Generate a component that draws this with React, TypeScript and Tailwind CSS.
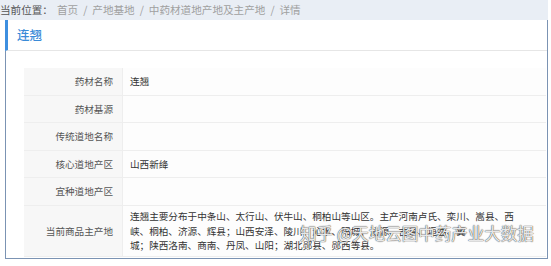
import React from "react";

const rows: { label: string; value: React.ReactNode; h: string }[] = [
  { label: "药材名称", value: "连翘", h: "h-[27.5px]" },
  { label: "药材基源", value: "", h: "h-[27.5px]" },
  { label: "传统道地名称", value: "", h: "h-[27.5px]" },
  { label: "核心道地产区", value: "山西新绛", h: "h-[27.5px]" },
  { label: "宜种道地产区", value: "", h: "h-[27.5px]" },
  {
    label: "当前商品主产地",
    value: (
      <div className="leading-[14.5px]">
        <div>连翘主要分布于中条山、太行山、伏牛山、桐柏山等山区。主产河南卢氏、栾川、嵩县、西</div>
        <div>峡、桐柏、济源、辉县；山西安泽、陵川、沁水、阳城、沁源、古县、垣曲、翼</div>
        <div>城；陕西洛南、商南、丹凤、山阳；湖北郧县、郧西等县。</div>
      </div>
    ),
    h: "h-[51.5px]",
  },
];

export default function App() {
  return (
    <div className="relative w-[551px] h-[266px] overflow-hidden bg-white font-['Noto_Sans_CJK_SC','Noto_Sans',sans-serif]">
      <div className="h-[20px] w-[548px] bg-[#e9eef5] flex items-center text-[10.6px] text-[#a0a0a0] whitespace-nowrap">
        <span className="text-[#555]">当前位置：</span>
        <span className="ml-[4px]">首页</span>
        <span className="mx-[5px]">/</span>
        <span>产地基地</span>
        <span className="mx-[5px]">/</span>
        <span>中药材道地产地及主产地</span>
        <span className="mx-[5px]">/</span>
        <span>详情</span>
      </div>
      <div className="ml-[5px] w-[543px] h-[239px] border-r border-b border-[#7b93b3] flex flex-col">
        <div className="h-[31px] border-l-[3px] border-[#3d8fe0] border-b border-b-[#e6e6e6] flex items-center pl-[9px]">
          <span className="text-[12.5px] text-[#3a8bd8] font-medium">连翘</span>
        </div>
        <div className="flex-1 border-l border-[#7b93b3] pl-[18px] pt-[17px] pr-[1px]">
          <div className="flex flex-col text-[9.6px]">
            {rows.map((r, i) => (
              <div key={i} className={`flex ${r.h} border-b border-[#eeeeee]`}>
                <div className="w-[99px] shrink-0 bg-[#f7f7f7] border-r border-[#eeeeee] flex items-center justify-end pr-[9px] text-[#555]">
                  {r.label}
                </div>
                <div className="flex-1 bg-[#fdfdfd] flex items-center pl-[7px] text-[#333]">
                  {r.value}
                </div>
              </div>
            ))}
          </div>
        </div>
      </div>
      <div className="absolute left-[300px] top-[221px] text-[16.5px] whitespace-nowrap text-[rgba(255,255,255,0.9)] [text-shadow:0_0_1px_rgba(60,60,60,0.9),0_0_1px_rgba(60,60,60,0.9)] font-['Noto_Sans_CJK_SC',sans-serif]">
        知乎 @天地云图中药产业大数据
      </div>
    </div>
  );
}
